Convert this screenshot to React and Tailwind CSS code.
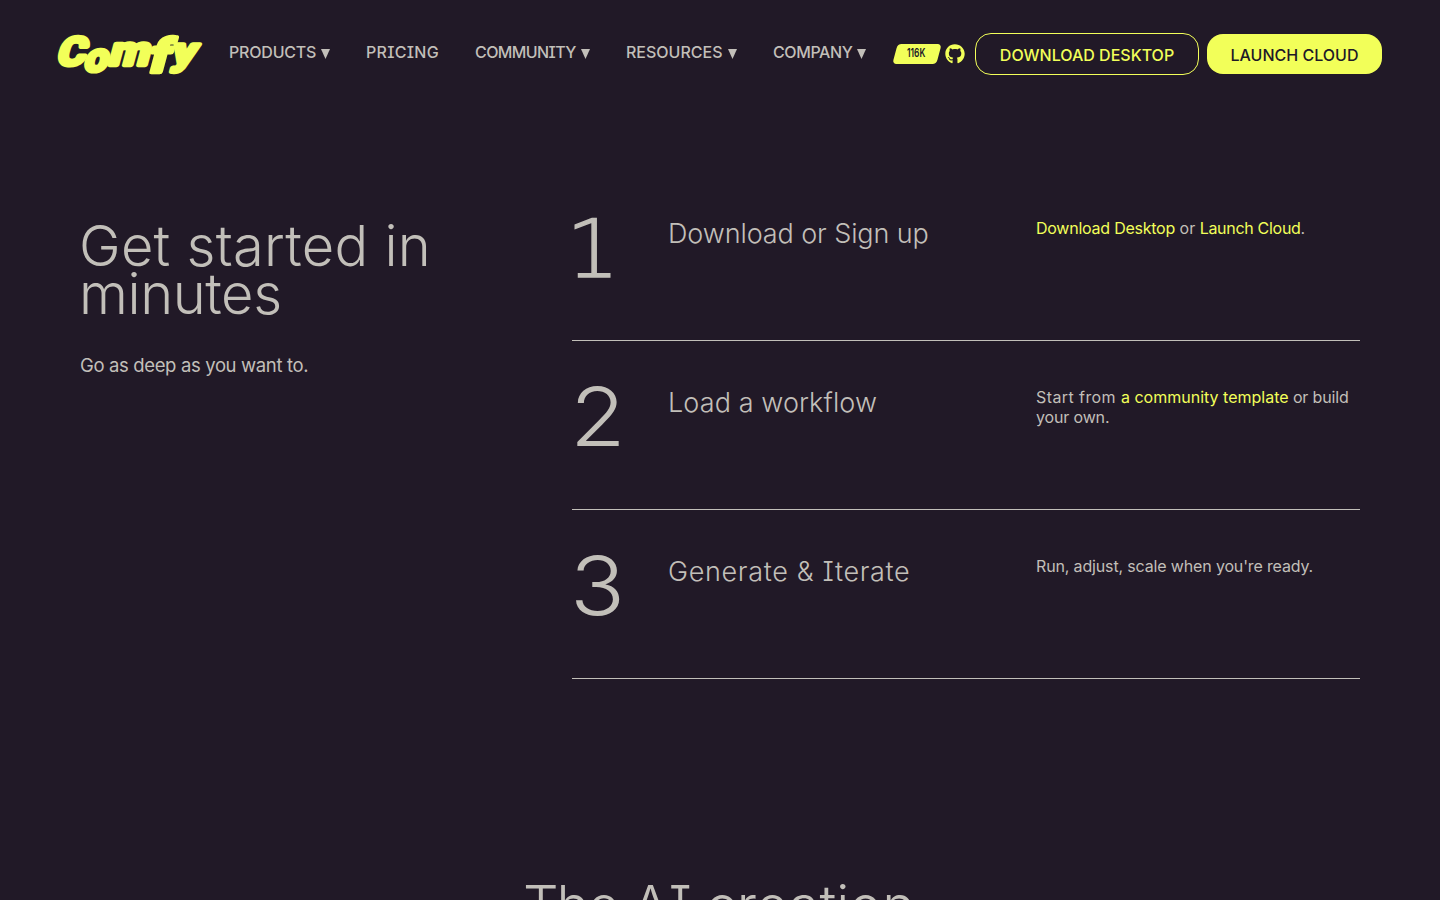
import React from 'react';
import { FaGithub } from 'react-icons/fa';

const navItems = [
  { label: 'PRODUCTS', menu: true, cls: 'w-[137px] tracking-[-0.2px]' },
  { label: 'PRICING', menu: false, cls: 'w-[109px] tracking-[0.3px]' },
  { label: 'COMMUNITY', menu: true, cls: 'w-[151px] tracking-[-0.6px]' },
  { label: 'RESOURCES', menu: true, cls: 'w-[147px]' },
  { label: 'COMPANY', menu: true, cls: 'w-[94px] tracking-[-0.4px]' },
];

const steps = [
  {
    num: '1',
    numCls: "font-['DejaVu_Sans'] font-extralight scale-x-[1.04] -translate-x-[5px] translate-y-[0.5px] [-webkit-text-stroke:1.4px_#c2bfb9]",
    title: 'Download or Sign up',
    titleCls: 'tracking-[-0.1px]',
    body: (
      <>
        <a href="#" className="text-[#f2ff59] tracking-[-0.24px]">Download Desktop</a> or{' '}
        <a href="#" className="text-[#f2ff59] tracking-[-0.3px]">Launch Cloud</a>.
      </>
    ),
  },
  {
    num: '2',
    numCls: 'font-light scale-x-[1.12] translate-x-px',
    title: 'Load a workflow',
    titleCls: 'tracking-[0.1px]',
    body: (
      <>
        <span className="tracking-[0.42px]">Start from </span>
        <a href="#" className="text-[#f2ff59]">a community template</a>
        <span className="tracking-[-0.15px]"> or build your own.</span>
      </>
    ),
  },
  {
    num: '3',
    numCls: 'font-light scale-x-[1.12] translate-x-px',
    title: 'Generate & Iterate',
    titleCls: 'tracking-[0.65px]',
    body: <span className="tracking-[-0.15px]">Run, adjust, scale when you're ready.</span>,
  },
];

const Logo = () => (
  <svg width="144" height="40" viewBox="0 0 144 40" className="shrink-0 overflow-visible" role="img" aria-label="Comfy">
    <g
      transform="skewX(-15)"
      fill="#f2ff59"
      stroke="#f2ff59"
      strokeWidth="4.5"
      strokeLinejoin="round"
      fontFamily="Roboto, sans-serif"
      fontWeight="700"
    >
      <text x="6" y="30.5" fontSize="39" textLength="28" lengthAdjust="spacingAndGlyphs">C</text>
      <text x="35" y="37.5" fontSize="39" textLength="23" lengthAdjust="spacingAndGlyphs">o</text>
      <text x="58" y="30.5" fontSize="40" textLength="40" lengthAdjust="spacingAndGlyphs">m</text>
      <text x="99" y="37.5" fontSize="46" textLength="20" lengthAdjust="spacingAndGlyphs">f</text>
      <text x="121" y="30" fontSize="37" textLength="23" lengthAdjust="spacingAndGlyphs">y</text>
    </g>
  </svg>
);

const Caret = () => (
  <svg width="9" height="10" viewBox="0 0 9 10" className="mt-1 shrink-0" fill="currentColor">
    <path d="M0 0h9L4.5 10z" />
  </svg>
);

const Header = () => (
  <header className="flex h-[108px] items-center px-[58px]">
    <Logo />
    <nav className="ml-[27px] -mt-1 flex text-base font-medium">
      {navItems.map((item) => (
        <a key={item.label} href="#" className={`flex items-center gap-[5px] whitespace-nowrap ${item.cls}`}>
          {item.label}
          {item.menu && <Caret />}
        </a>
      ))}
    </nav>
    <div className="ml-auto flex items-center">
      <div className="flex h-5 w-12 items-center justify-center">
        <div className="flex h-5 w-11 -skew-x-[15deg] items-center justify-center rounded bg-[#f2ff59]">
          <div className="skew-x-[15deg]">
            <div className="-mt-0.5 -ml-px scale-x-[0.7] text-xs font-semibold text-[#211927]">116K</div>
          </div>
        </div>
      </div>
      <FaGithub className="ml-1 size-5 text-[#f2ff59]" />
      <a href="#" className="ml-[10px] flex h-[42px] w-56 items-center justify-center rounded-2xl border border-[#f2ff59] pt-px font-medium whitespace-nowrap text-[#f2ff59]">
        DOWNLOAD DESKTOP
      </a>
      <a href="#" className="ml-2 flex h-10 w-[175px] items-center justify-center rounded-2xl bg-[#f2ff59] pt-px font-medium whitespace-nowrap text-[#211927]">
        LAUNCH CLOUD
      </a>
    </div>
  </header>
);

const App = () => {
  return (
    <div className="h-screen overflow-hidden bg-[#211927] font-['Inter',sans-serif] text-[#c2bfb9] [font-feature-settings:'cv08']">
      <Header />
      <section className="flex h-[571px] px-20 pt-16">
        <div className="w-[492px] pt-[50px]">
          <h1 className="-ml-px text-[56px] leading-[48px] font-light">
            <span className="block tracking-[0.25px]">Get started in</span>
            <span className="block tracking-[-0.4px]">minutes</span>
          </h1>
          <p className="mt-[33px] text-[18.5px] leading-7 tracking-[-0.36px]">Go as deep as you want to.</p>
        </div>
        <div className="w-[788px]">
          {steps.map((step) => (
            <div key={step.num} className="flex h-[169px] border-b border-[#c2bfb9] pt-[46px]">
              <div className="w-24">
                <div className={`w-fit text-[81px] leading-[60px] ${step.numCls}`}>{step.num}</div>
              </div>
              <h2 className={`w-[368px] text-[27px] leading-8 font-light ${step.titleCls}`}>{step.title}</h2>
              <p className="w-[324px] text-base leading-5">{step.body}</p>
            </div>
          ))}
        </div>
      </section>
      <section className="pt-[197px]">
        <h2 className="-ml-0.5 text-center text-[56px] leading-[60px] font-light">
          <span className="tracking-[-2px]">The </span>
          <span className="tracking-[-1px]">AI </span>
          <span className="tracking-[-0.1px]">creation</span>
        </h2>
      </section>
    </div>
  );
};

export default App;
